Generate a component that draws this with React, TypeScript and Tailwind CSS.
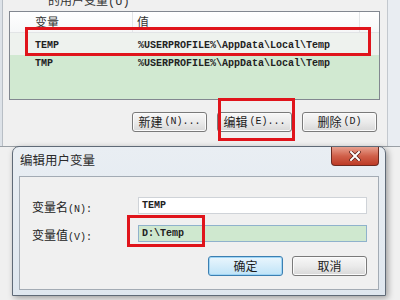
const cjk = "font-['Noto_Sans_CJK_SC',sans-serif]"
const mono = "font-['Liberation_Mono','Noto_Sans_CJK_SC',monospace]"

function Btn({ zh, tail, primary }: { zh: string; tail?: string; primary?: boolean }) {
  return (
    <div
      className={`w-[75px] h-[20px] rounded-[3px] border flex items-center justify-center text-[#1b1b1b] ${
        primary
          ? 'border-[#3c7fb1] bg-gradient-to-b from-[#eaf6fd] to-[#bfe3f7] shadow-[inset_0_0_0_1px_#9fd5f5]'
          : 'border-[#7a7a7a] bg-gradient-to-b from-[#f7f7f7] via-[#ebebeb] to-[#d8d8d8] shadow-[inset_0_0_0_1px_#fbfbfb]'
      }`}
    >
      <span className={`${cjk} text-[12px] leading-none`}>{zh}</span>
      {tail && <span className={`${mono} text-[10px] leading-none ml-[2px]`}>{tail}</span>}
    </div>
  )
}

function Row({ name, value, light }: { name: string; value: string; light?: boolean }) {
  return (
    <div className={`flex items-center ${light ? 'h-[22px] pt-[2px] bg-[#eef2ee]' : 'h-[17px]'}`}>
      <span className={`${mono} text-[10px] font-bold text-[#222] w-[128px] pl-[25px]`}>{name}</span>
      <span className={`${mono} text-[10px] font-bold text-[#222]`}>{value}</span>
    </div>
  )
}

export default function App() {
  return (
    <div className="relative w-[400px] h-[300px] overflow-hidden bg-[#f0f0f0] flex flex-col">
      {/* Parent dialog: user variables list */}
      <div className="h-[147px] flex shrink-0 border-b border-[#9aa0a6]">
        <div className="w-[3px] bg-[#dde2e8] border-r border-[#b8bec5]" />
        <div className="w-[385px] flex flex-col pl-[6px] border-r border-[#c3c8ce]">
          <div className="h-[11px] overflow-hidden pl-[39px]">
            <div className={`${cjk} text-[12px] leading-[14px] -mt-[7px] text-[#333]`}>
              的用户变量<span className={mono}>(U)</span>
            </div>
          </div>
          <div className="w-[371px] h-[89px] border border-[#828790] bg-[#d1e9d1] flex flex-col">
            <div className="h-[21px] bg-gradient-to-b from-white to-[#f6f7f8] flex items-center border-b border-[#e2e4e6]">
              <div className={`${cjk} w-[123px] pl-[25px] text-[12px] text-[#333] border-r border-[#e3e5e7] h-full flex items-center`}>
                变量
              </div>
              <div className={`${cjk} w-[227px] pl-[4px] text-[12px] text-[#333] border-r border-[#e3e5e7] h-full flex items-center`}>
                值
              </div>
            </div>
            <Row name="TEMP" value="%USERPROFILE%\AppData\Local\Temp" light />
            <Row name="TMP" value="%USERPROFILE%\AppData\Local\Temp" />
          </div>
          <div className="flex gap-[10px] mt-[12px] ml-[123px]">
            <Btn zh="新建" tail="(N)..." />
            <Btn zh="编辑" tail="(E)..." />
            <Btn zh="删除" tail="(D)" />
          </div>
        </div>
        <div className="flex-1 bg-[#e9edf2]" />
      </div>

      {/* Edit user variable dialog */}
      <div className="ml-[12px] w-[374px] h-[150px] -mt-[1px] rounded-t-[7px] border border-[#5f6a77] bg-gradient-to-b from-[#e9eef3] to-[#dfe7ef] shadow-[2px_2px_6px_rgba(0,0,0,0.35)] flex flex-col">
        <div className="h-[29px] flex items-start shrink-0">
          <div className={`${cjk} text-[12.5px] text-[#2a2a2a] pl-[7px] pt-[5px] leading-[16px]`}>编辑用户变量</div>
          <div className="ml-auto mr-[6px] w-[48px] h-[19px] rounded-b-[4px] border border-[#6d2a20] border-t-0 bg-gradient-to-b from-[#e7a08f] via-[#d0604a] to-[#bd3a25] flex items-center justify-center">
            <svg width="12" height="10" viewBox="0 0 12 10">
              <path d="M2 1 L10 9 M10 1 L2 9" stroke="#5a1e16" strokeWidth="3.4" strokeLinecap="square" />
              <path d="M2 1 L10 9 M10 1 L2 9" stroke="#ffffff" strokeWidth="2" strokeLinecap="square" />
            </svg>
          </div>
        </div>
        <div className="mx-[6px] h-[114px] border border-[#a3abb4] bg-[#f0f0f0] flex flex-col pl-[12px] pr-[10px] pt-[20px]">
          <div className="flex items-center h-[17px]">
            <div className="w-[106px] text-[#222]">
              <span className={`${cjk} text-[12px]`}>变量名</span>
              <span className={`${mono} text-[10px]`}>(N):</span>
            </div>
            <div className="w-[229px] h-[17px] border border-[#cfd3d8] bg-white flex items-center pl-[3px]">
              <span className={`${mono} text-[10px] font-bold text-[#222]`}>TEMP</span>
            </div>
          </div>
          <div className="flex items-center h-[17px] mt-[11px]">
            <div className="w-[106px] text-[#222]">
              <span className={`${cjk} text-[12px]`}>变量值</span>
              <span className={`${mono} text-[10px]`}>(V):</span>
            </div>
            <div className="w-[229px] h-[17px] border border-[#8fb2cc] bg-[#cfe8cf] flex items-center pl-[3px]">
              <span className={`${mono} text-[10px] font-bold text-[#222]`}>D:\Temp</span>
            </div>
          </div>
          <div className="flex justify-end gap-[9px] mt-[14px] pr-[1px]">
            <Btn zh="确定" primary />
            <Btn zh="取消" />
          </div>
        </div>
      </div>

      {/* Red annotation boxes */}
      <div className="absolute left-[25px] top-[27px] w-[346px] h-[29px] border-[3px] border-[#e0141b]" />
      <div className="absolute left-[218px] top-[98px] w-[77px] h-[43px] border-[3px] border-[#e0141b]" />
      <div className="absolute left-[127px] top-[215px] w-[78px] h-[32px] border-[3px] border-[#e0141b]" />
    </div>
  )
}
